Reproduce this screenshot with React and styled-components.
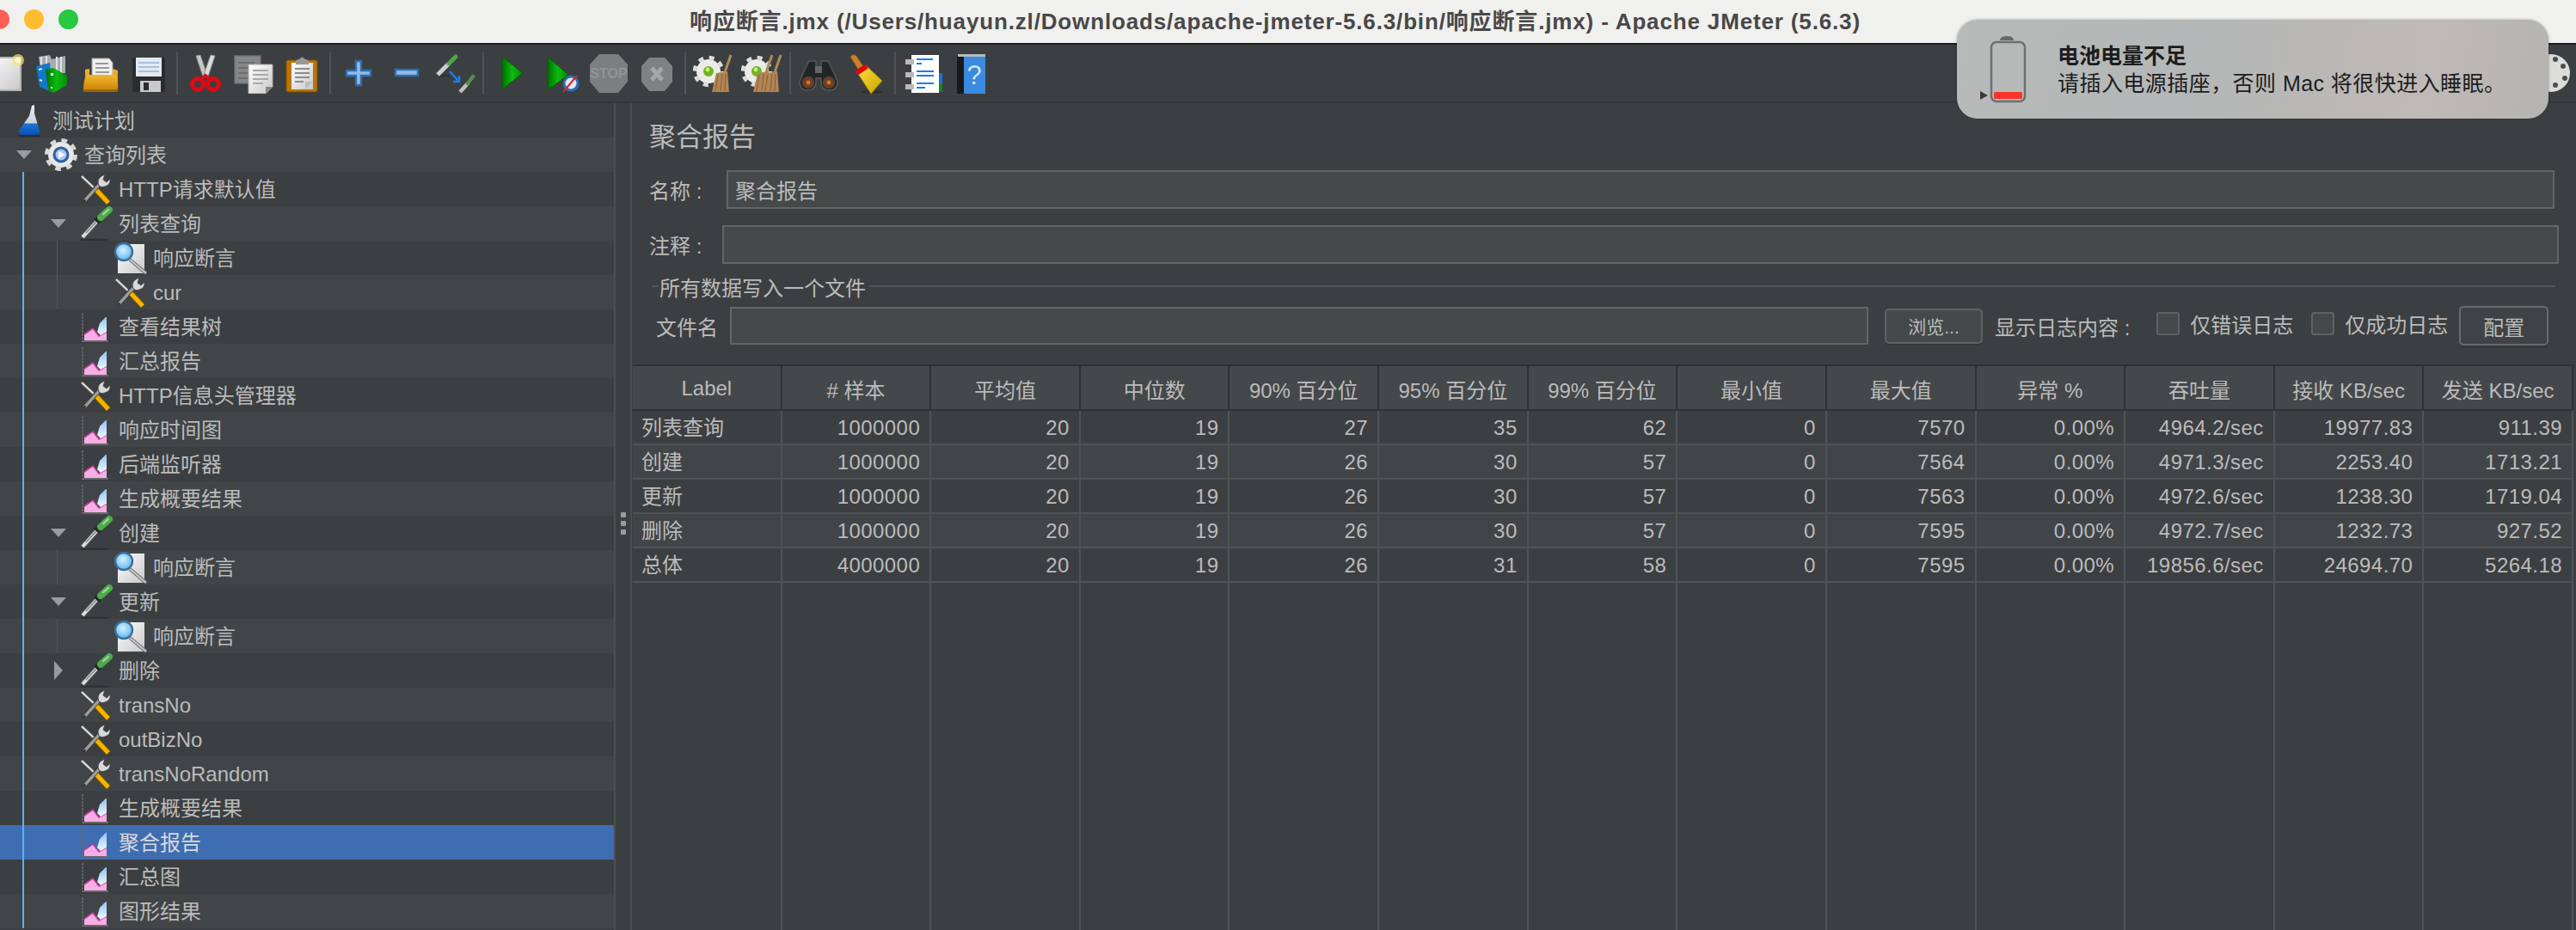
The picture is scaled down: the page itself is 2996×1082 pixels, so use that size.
import React from 'react';
import styled, { createGlobalStyle } from 'styled-components';

const FONT = '"Liberation Sans", "Noto Sans CJK SC", sans-serif';

const GlobalStyle = createGlobalStyle`
  html, body { margin: 0; padding: 0; background: #3c3f41; overflow: hidden; }
  body { font-family: ${FONT}; }
`;

const Page = styled.div`
  position: relative;
  width: 2996px;
  height: 1082px;
  overflow: hidden;
  display: flex;
  flex-direction: column;
  background: #3c3f41;
  color: #bbbbbb;
`;

/* ---------- title bar ---------- */
const TitleBar = styled.div`
  height: 50px;
  flex: none;
  display: flex;
  align-items: center;
  background: #f0f0ee;
  border-bottom: 2px solid #1c1c1c;
  margin-left: -12px;
`;
const Lights = styled.div`
  display: flex;
  gap: 17px;
  width: 0;
  flex: none;
  margin-top: -6px;
`;
const Light = styled.span`
  flex: none;
  width: 23px;
  height: 23px;
  border-radius: 50%;
  background: ${p => p.$color};
`;
const Title = styled.div`
  flex: 1;
  text-align: center;
  font-size: 26px;
  font-weight: 700;
  color: #484848;
  padding-right: 18px;
  margin-top: -6px;
  letter-spacing: 0.85px;
  white-space: nowrap;
`;

/* ---------- toolbar ---------- */
const Toolbar = styled.div`
  height: 66px;
  flex: none;
  display: flex;
  align-items: center;
  margin-left: -24px;
  border-bottom: 2px solid #343638;
`;
const ToolButton = styled.div`
  width: 56.25px;
  height: 48px;
  flex: none;
  display: flex;
  justify-content: center;
`;
const ToolSep = styled.div`
  width: 9.5px;
  flex: none;
  height: 50px;
  display: flex;
  justify-content: center;
  &::before {
    content: '';
    width: 2px;
    background: #505355;
  }
`;
const ToolEnd = styled(ToolButton)`
  margin-left: auto;
  margin-right: 1px;
`;

/* ---------- body ---------- */
const Body = styled.div`
  flex: 1;
  display: flex;
  min-height: 0;
`;
const Tree = styled.div`
  position: relative;
  width: 714px;
  flex: none;
  border-right: 2px solid #4b4e50;
  &::after {
    content: '';
    position: absolute;
    left: 26px;
    top: 80px;
    width: 2px;
    height: 880px;
    background: #5ab1f2;
  }
`;
const Row = styled.div`
  position: relative;
  height: 40px;
  display: flex;
  align-items: center;
  font-size: 24px;
  white-space: nowrap;
  color: ${p => (p.$selected ? '#d6d9dd' : '#bbbbbb')};
  background: ${p => (p.$selected ? '#3f6db1' : p.$alt ? '#414548' : '#3c3f41')};
  &::before {
    content: '';
    display: ${p => (p.$guide ? 'block' : 'none')};
    position: absolute;
    left: 66px;
    top: 0;
    bottom: 0;
    width: 1px;
    background: #54575a;
  }
`;
const RowLabel = styled.span`
  margin-top: ${p => (p.$cjk ? '-3px' : '1px')};
`;
const Indent = styled.div`
  width: ${p => p.$level * 40 + 13}px;
  flex: none;
  display: flex;
  justify-content: flex-end;
  padding-right: 16px;
  box-sizing: border-box;
`;
const NodeIcon = styled.svg`
  width: 41px;
  height: 40px;
  flex: none;
  margin-right: 4px;
  overflow: visible;
`;
const Splitter = styled.div`
  width: 17px;
  flex: none;
  display: flex;
  flex-direction: column;
  align-items: center;
  justify-content: center;
  gap: 4px;
  padding-top: 16px;
`;
const Dot = styled.span`
  width: 6px;
  height: 6px;
  border-radius: 1px;
  background: #9b9b9b;
`;
const Panel = styled.div`
  flex: 1;
  min-width: 0;
  display: flex;
  flex-direction: column;
  border-left: 2px solid #4b4e50;
`;
const PanelHead = styled.div`
  padding-left: 20px;
  flex: none;
`;
const PanelTitle = styled.div`
  font-size: 31px;
  line-height: 40px;
  padding-top: 20px;
  margin-bottom: 18px;
`;
const FieldRow = styled.div`
  display: flex;
  align-items: center;
  height: 45px;
  font-size: 24px;
  margin-right: ${p => p.$right}px;
  margin-bottom: ${p => p.$below || 0}px;
`;
const FieldLabel = styled.div`
  width: ${p => p.$width}px;
  flex: none;
  white-space: nowrap;
`;
const Field = styled.div`
  flex: 1;
  height: 100%;
  box-sizing: border-box;
  display: flex;
  align-items: center;
  padding-left: 8px;
  background: #45494a;
  border: 2px solid #646464;
`;
const Legend = styled.div`
  display: flex;
  align-items: center;
  height: 30px;
  margin: 11px 24px 9px 3px;
  font-size: 24px;
  gap: 1px;
  &::before, &::after {
    content: '';
    height: 2px;
    background: #525558;
  }
  &::before { width: 8px; flex: none; }
  &::after { flex: 1; margin-left: 3px; }
`;
const FileRow = styled.div`
  display: flex;
  align-items: center;
  height: 44px;
  padding-left: 8px;
  font-size: 24px;
  white-space: nowrap;
`;
const FileField = styled(Field)`
  flex: none;
  width: 1324px;
  height: 44px;
  margin-left: 14px;
`;
const Browse = styled.div`
  flex: none;
  width: 114px;
  height: 41px;
  margin: 0 14px 0 19px;
  box-sizing: border-box;
  display: flex;
  align-items: center;
  justify-content: center;
  border: 2px solid #5f6263;
  border-radius: 5px;
  background: #45494a;
  font-size: 21px;
  box-shadow: 0 2px 0 #35373a;
`;
const Check = styled.span`
  flex: none;
  width: 27px;
  height: 27px;
  box-sizing: border-box;
  margin: -6px 12px 0 ${p => p.$left}px;
  border: 2px solid #5f6263;
  border-radius: 3px;
  background: #45494a;
`;
const CheckText = styled.span`
  margin-top: -6px;
`;
const ConfigButton = styled.div`
  flex: none;
  width: 104px;
  height: 46px;
  margin-left: 13px;
  box-sizing: border-box;
  display: flex;
  align-items: center;
  justify-content: center;
  border: 2px solid #686b6c;
  border-radius: 5px;
  background: #3f4345;
  box-shadow: 0 3px 0 #35373a;
`;

/* ---------- table ---------- */
const Table = styled.div`
  flex: 1;
  min-height: 0;
  display: flex;
  flex-direction: column;
  margin: 23px 3px 0 1px;
  border-top: 2px solid #2f3234;
`;
const HeadRow = styled.div`
  display: grid;
  grid-template-columns: repeat(13, 1fr);
  height: 52px;
  flex: none;
  box-sizing: border-box;
  background: #44484a;
  border-bottom: 2px solid #2f3234;
`;
const HeadCell = styled.div`
  display: flex;
  align-items: center;
  justify-content: center;
  padding-top: 2px;
  font-size: 24px;
  white-space: nowrap;
  border-right: 2px solid #2f3234;
`;
const DataRow = styled.div`
  display: grid;
  grid-template-columns: repeat(13, 1fr);
  height: 40px;
  flex: none;
  box-sizing: border-box;
  background: ${p => (p.$alt ? '#414548' : '#3c3f41')};
  border-bottom: 2px solid #505355;
`;
const Cell = styled.div`
  display: flex;
  align-items: center;
  justify-content: ${p => (p.$first ? 'flex-start' : 'flex-end')};
  padding: ${p => (p.$first ? '0 0 5px 10px' : '0 11px 0 0')};
  font-size: 24px;
  letter-spacing: ${p => (p.$first ? '0' : '0.45px')};
  white-space: nowrap;
  min-width: 0;
  border-right: 2px solid #505355;
`;
const FillerRow = styled.div`
  flex: 1;
  display: grid;
  grid-template-columns: repeat(13, 1fr);
  margin-top: 0;
`;
const FillerCell = styled.div`
  border-right: 2px solid #505355;
`;

/* ---------- notification ---------- */
const Notice = styled.div`
  position: absolute;
  left: 2276px;
  top: 23px;
  width: 688px;
  height: 115px;
  box-sizing: border-box;
  display: flex;
  align-items: center;
  padding-left: 25px;
  border-radius: 24px;
  background: linear-gradient(100deg, #b7bab9 0%, #b4b7b7 40%, #bfb9b6 80%, #b4b4b3 100%);
  box-shadow: 0 0 3px rgba(30, 30, 30, 0.4);
  color: #1d1d1d;
`;
const BatterySvg = styled.svg`
  width: 56px;
  height: 80px;
  flex: none;
  margin-right: 36px;
`;
const NoticeText = styled.div`
  display: flex;
  flex-direction: column;
  gap: 2px;
  font-size: 25px;
  line-height: 30px;
  white-space: nowrap;
`;
const NoticeTitle = styled.div`
  font-weight: 700;
`;
const NoticeBody = styled.div`
  letter-spacing: 0.45px;
`;

const HiddenDefs = styled.svg`
  position: absolute;
  width: 0;
  height: 0;
`;

/* ---------- icon drawings ---------- */
const Defs = () => (
  <HiddenDefs>
    <defs>
      <linearGradient id="paper" x1="0" y1="0" x2="1" y2="1">
        <stop offset="0" stopColor="#ffffff" />
        <stop offset="1" stopColor="#c8c8c8" />
      </linearGradient>
      <linearGradient id="green" x1="0" y1="0" x2="1" y2="0">
        <stop offset="0" stopColor="#006f00" />
        <stop offset="0.5" stopColor="#0bbb10" />
        <stop offset="1" stopColor="#038a08" />
      </linearGradient>
      <linearGradient id="folder" x1="0" y1="0" x2="0" y2="1">
        <stop offset="0" stopColor="#f3b72c" />
        <stop offset="1" stopColor="#c77f06" />
      </linearGradient>
      <radialGradient id="lens" cx="0.45" cy="0.4" r="0.6">
        <stop offset="0" stopColor="#d4f3ff" />
        <stop offset="1" stopColor="#5eb6f0" />
      </radialGradient>
      <linearGradient id="flask" x1="0" y1="0" x2="0" y2="1">
        <stop offset="0" stopColor="#eceeef" />
        <stop offset="0.6" stopColor="#c8d2de" />
        <stop offset="0.63" stopColor="#1d74d8" />
        <stop offset="1" stopColor="#0a4fb0" />
      </linearGradient>
      <linearGradient id="broom" x1="0" y1="0" x2="1" y2="1">
        <stop offset="0" stopColor="#ffe23c" />
        <stop offset="1" stopColor="#c9a400" />
      </linearGradient>
      <linearGradient id="crystal" x1="0" y1="0" x2="0" y2="1">
        <stop offset="0" stopColor="#8fc4f2" />
        <stop offset="1" stopColor="#f2f8ff" />
      </linearGradient>
    </defs>
  </HiddenDefs>
);

const FlaskNode = () => (
  <g>
    <ellipse cx="13" cy="37" rx="14" ry="1.6" fill="#2c2e30" />
    <path d="M16 2 L19 1 L19 11 L25 31 Q26 36 21 36 H5 Q0 36 1 31 L13 14Z" fill="url(#flask)" />
  </g>
);

const GearNode = ({ cx = 18, cy = 20 }) => (
  <g>
    <circle cx={cx} cy={cy} r="15" fill="#e8e8e6" />
    <circle cx={cx} cy={cy} r="16.5" fill="none" stroke="#d8d8d6" strokeWidth="5" strokeDasharray="6.5 6.45" />
    <circle cx={cx} cy={cy} r="9.5" fill="#2d5da6" />
    <circle cx={cx} cy={cy} r="6.5" fill="#a8c8ea" />
    <path d={`M${cx - 3} ${cy - 4.5} L${cx + 5} ${cy} L${cx - 3} ${cy + 4.5}Z`} fill="#f4f8fc" />
  </g>
);

const ToolsNode = () => (
  <g>
    <line x1="2" y1="5" x2="20" y2="22" stroke="#555" strokeWidth="4" />
    <line x1="2" y1="5" x2="20" y2="22" stroke="#e4e4e4" strokeWidth="2" />
    <line x1="4" y1="35" x2="24" y2="13" stroke="#3b3b3b" strokeWidth="6" />
    <line x1="5" y1="34" x2="24" y2="13" stroke="#9a9c9e" strokeWidth="3.4" />
    <circle cx="5.5" cy="33.5" r="1.4" fill="#333" />
    <path d="M22 16 Q19 9 25 5 L29 3 L27 9 L31 12 L35 8 Q36 15 29 17 Q25 19 22 16Z" fill="#d9d9d9" stroke="#4a4a4a" strokeWidth="1" />
    <line x1="19" y1="21" x2="33" y2="36" stroke="#6b5000" strokeWidth="7.5" />
    <line x1="19.5" y1="21.5" x2="33" y2="36" stroke="#f4b400" strokeWidth="5" />
  </g>
);

const DropperShape = () => (
  <g>
    <line x1="3" y1="36" x2="22" y2="15" stroke="#55585a" strokeWidth="6" />
    <line x1="3" y1="36" x2="21" y2="16" stroke="#dcdcdc" strokeWidth="4" />
    <line x1="7" y1="31" x2="19" y2="18" stroke="#808080" strokeWidth="1.3" />
    <line x1="19" y1="18" x2="25" y2="12" stroke="#1f2a20" strokeWidth="8" />
    <line x1="24" y1="13" x2="34" y2="4" stroke="#4faa4d" strokeWidth="8" strokeLinecap="round" />
    <line x1="27" y1="9" x2="33" y2="4" stroke="#93d68f" strokeWidth="2.4" strokeLinecap="round" />
  </g>
);

const DropperNode = () => (
  <g>
    <ellipse cx="17" cy="39" rx="17" ry="1.6" fill="#2f3133" />
    <DropperShape />
  </g>
);

const AssertNode = () => (
  <g>
    <rect x="4" y="4" width="31" height="34" fill="url(#paper)" />
    <line x1="18" y1="22" x2="37" y2="38" stroke="#6c6e70" strokeWidth="4" />
    <line x1="18" y1="22" x2="37" y2="38" stroke="#c8c8c8" strokeWidth="2" />
    <circle cx="11" cy="13" r="10" fill="url(#lens)" stroke="#3e6c9c" strokeWidth="2.4" />
  </g>
);

const GraphNode = () => (
  <g>
    <line x1="3" y1="4" x2="3" y2="38" stroke="#66696c" strokeWidth="1.6" strokeDasharray="3 1" />
    <line x1="2" y1="37" x2="33" y2="37" stroke="#66696c" strokeWidth="2" />
    <path d="M5 36 L5 29 L15 22 L22 31 L31 26 L31 36Z" fill="#f8aee4" />
    <path d="M5 29 L15 22 L22 31 L31 26" fill="none" stroke="#bf3f9c" strokeWidth="1.6" />
    <path d="M20 26 L23 16 L30 9 L31 9 L31 26 L24 30Z" fill="url(#crystal)" />
  </g>
);

const nodeIcons = {
  flask: <g transform="translate(5 1)"><FlaskNode /></g>,
  gear: <GearNode />,
  tools: <ToolsNode />,
  dropper: <DropperNode />,
  assert: <AssertNode />,
  graph: <GraphNode />,
};

const ArrowDown = () => (
  <svg width="18" height="12" viewBox="0 0 18 12">
    <path d="M0 1 H18 L9 11Z" fill="#999c9e" />
  </svg>
);

const ArrowRight = () => (
  <svg width="18" height="24" viewBox="0 0 18 24">
    <path d="M4 1 L14 12 L4 23Z" fill="#999c9e" />
  </svg>
);

const Clock = () => (
  <g>
    <circle cx="37" cy="36" r="8" fill="#dfe9f2" stroke="#2e6db0" strokeWidth="3" />
    <line x1="28" y1="46" x2="44" y2="27" stroke="#e02030" strokeWidth="2" />
  </g>
);

const Broomstick = ({ x = 0 }) => (
  <g transform={`translate(${x} 0)`}>
    <line x1="40" y1="3" x2="32" y2="26" stroke="#b08a5c" strokeWidth="3" />
    <path d="M23 24 L36 22 L38 46 L18 46Z" fill="#b28554" />
    <path d="M25 26 L22 45 M30 25 L28 45 M34 25 L33 45" stroke="#8c6338" strokeWidth="1.2" />
  </g>
);

const ClearGear = () => (
  <g>
    <circle cx="18" cy="22" r="14" fill="#ebebe9" />
    <circle cx="18" cy="22" r="16" fill="none" stroke="#dcdcda" strokeWidth="4.5" strokeDasharray="6 6.6" />
    <circle cx="18" cy="22" r="6" fill="#6fb61f" />
    <circle cx="17" cy="20" r="2.4" fill="#c5ef7c" />
  </g>
);

const toolIcons = {
  newDoc: (
    <g>
      <rect x="4" y="6" width="40" height="38" fill="url(#paper)" stroke="#b4b4b4" strokeWidth="2" />
      <circle cx="41" cy="9" r="7" fill="#f3e27a" opacity="0.7" />
      <circle cx="41" cy="9" r="3.5" fill="#fff6c4" />
    </g>
  ),
  templates: (
    <g>
      <path d="M9 5 L22 3 L24 8 L40 4 L40 24 L12 26Z" fill="#a8adb0" />
      <path d="M12 5 L12 24 M18 4 L18 24 M30 5 L30 24 M35 5 L35 24" stroke="#dfe3e5" strokeWidth="2" />
      <path d="M6 16 L22 12 L24 46 L10 40Z" fill="#1577c8" />
      <path d="M9 20 L13 19 M10 32 L13 33" stroke="#cfe8ff" strokeWidth="2" />
      <path d="M17 20 L26 18 L42 27 L42 38 L26 47 L20 44Z" fill="url(#green)" />
      <rect x="23" y="24" width="3" height="3" fill="#e8ffe8" />
      <rect x="23" y="40" width="2" height="2" fill="#e8ffe8" />
    </g>
  ),
  open: (
    <g>
      <path d="M14 7 L34 7 L38 12 L38 28 L14 28Z" fill="#efefef" stroke="#a4a4a4" strokeWidth="1" />
      <path d="M18 13 H33 M18 18 H34 M18 23 H34" stroke="#9a9a9a" strokeWidth="2" />
      <path d="M6 20 L11 19 L11 27 L38 27 L38 19 L44 21 L44 46 L6 46Z" fill="url(#folder)" />
      <path d="M4 46 Q4 30 8 26 L42 26 Q45 34 44 46Z" fill="url(#folder)" />
      <rect x="4" y="43" width="40" height="3" fill="#9c6404" />
    </g>
  ),
  save: (
    <g>
      <path d="M5 6 H43 V44 Q43 46 41 46 H8 Q5 46 5 43Z" fill="#2b2c2e" />
      <rect x="9" y="6" width="30" height="22" fill="#e3eaf2" />
      <path d="M12 12 H36 M12 17 H36 M12 22 H36" stroke="#a7c2dc" strokeWidth="2" />
      <rect x="14" y="33" width="24" height="13" fill="#c9c9c9" />
      <rect x="18" y="35" width="6" height="9" fill="#2b2c2e" />
    </g>
  ),
  cut: (
    <g>
      <path d="M13 4 L18 3 L26 26 L21 28Z" fill="#c8c8c8" stroke="#8d8d8d" strokeWidth="1" />
      <path d="M35 4 L30 3 L22 26 L27 28Z" fill="#dcdcdc" stroke="#8d8d8d" strokeWidth="1" />
      <circle cx="15" cy="37" r="6.5" fill="none" stroke="#e00a14" strokeWidth="5" />
      <circle cx="33" cy="37" r="6.5" fill="none" stroke="#e00a14" strokeWidth="5" />
      <path d="M19 31 L24 27 L29 31" fill="none" stroke="#e00a14" strokeWidth="4" />
    </g>
  ),
  copy: (
    <g>
      <rect x="2" y="4" width="30" height="32" fill="#858789" stroke="#6d6f71" strokeWidth="1.4" />
      <path d="M6 12 H26 M6 18 H26 M6 24 H26 M6 30 H26" stroke="#6c6e70" strokeWidth="2" />
      <path d="M18 14 H46 V40 L38 48 H18Z" fill="url(#paper)" stroke="#a9a9a9" strokeWidth="1" />
      <path d="M23 21 H41 M23 26 H41 M23 31 H41 M23 36 H35" stroke="#a9a9a9" strokeWidth="2" />
      <path d="M46 40 L38 40 L38 48Z" fill="#888" />
    </g>
  ),
  paste: (
    <g>
      <rect x="6" y="9" width="36" height="37" rx="2" fill="#bc7504" stroke="#7d4d00" strokeWidth="1" />
      <rect x="12" y="12" width="25" height="31" fill="url(#paper)" />
      <path d="M16 19 H33 M16 24 H33 M16 29 H33 M16 34 H26" stroke="#8c8c8c" strokeWidth="2" />
      <path d="M17 11 Q17 8 21 8 Q24 3 28 8 Q32 8 32 12 L32 14 H17Z" fill="#9a9a9a" />
      <path d="M37 34 L28 43 L28 34Z" fill="#bdbdbd" />
    </g>
  ),
  plus: (
    <g>
      <path d="M21 10 H27 V21 H38 V27 H27 V38 H21 V27 H10 V21 H21Z" fill="#8fbbe6" stroke="#2f6eb5" strokeWidth="2.4" />
    </g>
  ),
  minus: <rect x="11" y="20" width="26" height="7" fill="#8fbbe6" stroke="#2f6eb5" strokeWidth="2.4" />,
  toggle: (
    <g>
      <ellipse cx="10" cy="27" rx="8" ry="1.6" fill="#303234" />
      <line x1="4" y1="26" x2="17" y2="13" stroke="#cdcdcd" strokeWidth="5" />
      <line x1="17" y1="13" x2="25" y2="5" stroke="#4ea64a" strokeWidth="5" strokeLinecap="round" />
      <path d="M18 22 L28 33 M29 27 L29 34 L22 34" fill="none" stroke="#1a7bf0" strokeWidth="2.6" />
      <line x1="30" y1="46" x2="40" y2="35" stroke="#c0c0c0" strokeWidth="4.5" />
      <line x1="39" y1="36" x2="45" y2="28" stroke="#4e8f4c" strokeWidth="4.5" strokeLinecap="round" />
    </g>
  ),
  start: <path d="M13 5 L37 24 L13 43Z" fill="url(#green)" stroke="#046004" strokeWidth="1" />,
  startNoPause: (
    <g>
      <path d="M10 5 L34 26 L10 44Z" fill="url(#green)" stroke="#046004" strokeWidth="1" />
      <Clock />
    </g>
  ),
  stop: (
    <g>
      <path d="M13 2 H35 L46 14 V34 L35 47 H13 L2 34 V14Z" fill="#7d7e7f" />
      <text x="24" y="30" textAnchor="middle" fontSize="16" fontWeight="700" fontFamily="Liberation Sans" fill="#939495">STOP</text>
    </g>
  ),
  shutdown: (
    <g>
      <path d="M15 6 H33 L42 16 V34 L33 45 H15 L6 34 V16Z" fill="#808182" />
      <path d="M18 18 L30 32 M30 18 L18 32" stroke="#a5a6a7" strokeWidth="5" />
    </g>
  ),
  clear: (
    <g>
      <ClearGear />
      <Broomstick x={4} />
    </g>
  ),
  clearAll: (
    <g>
      <ClearGear />
      <Broomstick x={-4} />
      <Broomstick x={6} />
    </g>
  ),
  binoculars: (
    <g>
      <path d="M7 22 L13 10 H21 V22 H27 V10 H35 L41 22 L46 34 Q46 44 36 44 Q27 44 27 34 V30 H21 V34 Q21 44 11 44 Q2 44 2 34Z" fill="#232425" stroke="#59595a" strokeWidth="1.4" />
      <circle cx="12" cy="35" r="6.5" fill="#7a3d16" stroke="#444" strokeWidth="1.5" />
      <circle cx="36" cy="35" r="6.5" fill="#7a3d16" stroke="#444" strokeWidth="1.5" />
      <circle cx="12" cy="35" r="2.4" fill="#c37a3a" />
      <circle cx="36" cy="35" r="2.4" fill="#c37a3a" />
      <rect x="20" y="16" width="8" height="8" fill="#666" />
    </g>
  ),
  broom: (
    <g>
      <ellipse cx="30" cy="46" rx="13" ry="2" fill="#2f3133" />
      <path d="M5 5 Q8 1 12 4 L22 19 L16 23 Z" fill="#c9812b" stroke="#8a5714" strokeWidth="1" />
      <path d="M12 22 L23 15 L42 33 L29 48 Z" fill="url(#broom)" stroke="#a68600" strokeWidth="1" />
      <path d="M12 24 L24 16" stroke="#e0060e" strokeWidth="6" />
    </g>
  ),
  log: (
    <g>
      <rect x="38" y="24" width="8" height="12" fill="#1a70d8" />
      <rect x="38" y="36" width="8" height="10" fill="#108a10" />
      <rect x="10" y="3" width="32" height="44" fill="#ffffff" />
      <rect x="3" y="8" width="10" height="6" fill="#b8b8b8" />
      <rect x="3" y="23" width="10" height="6" fill="#b8b8b8" />
      <rect x="3" y="37" width="10" height="6" fill="#b8b8b8" />
      <path d="M16 8 H35 M16 13 H22 M16 22 H36 M16 27 H36 M16 36 H36 M16 41 H26" stroke="#1a7bea" strokeWidth="2" />
    </g>
  ),
  help: (
    <g>
      <rect x="7" y="3" width="33" height="45" fill="#3a8ae0" />
      <rect x="7" y="3" width="8" height="45" fill="#17191b" />
      <rect x="8" y="2" width="32" height="3" fill="#b9bbbd" />
      <text x="27" y="37" textAnchor="middle" fontSize="31" fontFamily="Liberation Sans" fill="#cfe4fa">?</text>
    </g>
  ),
  settings: (
    <g>
      <circle cx="24" cy="24" r="22" fill="#dcdcdb" />
      <circle cx="38" cy="16" r="3" fill="#4d4d4d" />
      <circle cx="40" cy="30" r="3" fill="#4d4d4d" />
      <circle cx="29" cy="38" r="3" fill="#4d4d4d" />
      <circle cx="29" cy="8" r="3" fill="#4d4d4d" />
    </g>
  ),
};

const Tool = ({ name }) => (
  <ToolButton>
    <svg width="48" height="48" viewBox="0 0 48 48">{toolIcons[name]}</svg>
  </ToolButton>
);

const toolbar = [
  'newDoc', 'templates', 'open', 'save', '|',
  'cut', 'copy', 'paste', '|',
  'plus', 'minus', 'toggle', '|',
  'start', 'startNoPause', 'stop', 'shutdown', '|',
  'clear', 'clearAll', '|',
  'binoculars', 'broom', '|',
  'log', 'help',
];

const nodes = [
  { label: '测试计划', level: 0, icon: 'flask' },
  { label: '查询列表', level: 1, icon: 'gear', arrow: 'down' },
  { label: 'HTTP请求默认值', level: 2, icon: 'tools' },
  { label: '列表查询', level: 2, icon: 'dropper', arrow: 'down' },
  { label: '响应断言', level: 3, icon: 'assert', guide: true },
  { label: 'cur', level: 3, icon: 'tools', guide: true },
  { label: '查看结果树', level: 2, icon: 'graph' },
  { label: '汇总报告', level: 2, icon: 'graph' },
  { label: 'HTTP信息头管理器', level: 2, icon: 'tools' },
  { label: '响应时间图', level: 2, icon: 'graph' },
  { label: '后端监听器', level: 2, icon: 'graph' },
  { label: '生成概要结果', level: 2, icon: 'graph' },
  { label: '创建', level: 2, icon: 'dropper', arrow: 'down' },
  { label: '响应断言', level: 3, icon: 'assert', guide: true },
  { label: '更新', level: 2, icon: 'dropper', arrow: 'down' },
  { label: '响应断言', level: 3, icon: 'assert', guide: true },
  { label: '删除', level: 2, icon: 'dropper', arrow: 'right' },
  { label: 'transNo', level: 2, icon: 'tools' },
  { label: 'outBizNo', level: 2, icon: 'tools' },
  { label: 'transNoRandom', level: 2, icon: 'tools' },
  { label: '生成概要结果', level: 2, icon: 'graph' },
  { label: '聚合报告', level: 2, icon: 'graph', selected: true },
  { label: '汇总图', level: 2, icon: 'graph' },
  { label: '图形结果', level: 2, icon: 'graph' },
];

const columns = ['Label', '# 样本', '平均值', '中位数', '90% 百分位', '95% 百分位', '99% 百分位', '最小值', '最大值', '异常 %', '吞吐量', '接收 KB/sec', '发送 KB/sec'];

const results = [
  ['列表查询', '1000000', '20', '19', '27', '35', '62', '0', '7570', '0.00%', '4964.2/sec', '19977.83', '911.39'],
  ['创建', '1000000', '20', '19', '26', '30', '57', '0', '7564', '0.00%', '4971.3/sec', '2253.40', '1713.21'],
  ['更新', '1000000', '20', '19', '26', '30', '57', '0', '7563', '0.00%', '4972.6/sec', '1238.30', '1719.04'],
  ['删除', '1000000', '20', '19', '26', '30', '57', '0', '7595', '0.00%', '4972.7/sec', '1232.73', '927.52'],
  ['总体', '4000000', '20', '19', '26', '31', '58', '0', '7595', '0.00%', '19856.6/sec', '24694.70', '5264.18'],
];

const hasCjk = text => /[^\x00-\x7f]/.test(text);

export default function App() {
  return (
    <Page>
      <GlobalStyle />
      <Defs />
      <TitleBar>
        <Lights>
          <Light $color="#ff5f57" />
          <Light $color="#febc2e" />
          <Light $color="#28c840" />
        </Lights>
        <Title>响应断言.jmx (/Users/huayun.zl/Downloads/apache-jmeter-5.6.3/bin/响应断言.jmx) - Apache JMeter (5.6.3)</Title>
      </TitleBar>
      <Toolbar>
        {toolbar.map((name, i) => (name === '|' ? <ToolSep key={i} /> : <Tool key={i} name={name} />))}
        <ToolEnd>
          <svg width="48" height="48" viewBox="0 0 48 48">{toolIcons.settings}</svg>
        </ToolEnd>
      </Toolbar>
      <Body>
        <Tree>
          {nodes.map((n, i) => (
            <Row key={i} $alt={i % 2 === 1} $selected={n.selected} $guide={n.guide}>
              <Indent $level={n.level}>
                {n.arrow === 'down' && <ArrowDown />}
                {n.arrow === 'right' && <ArrowRight />}
              </Indent>
              <NodeIcon viewBox="0 0 41 40">{nodeIcons[n.icon]}</NodeIcon>
              <RowLabel $cjk={hasCjk(n.label)}>{n.label}</RowLabel>
            </Row>
          ))}
        </Tree>
        <Splitter>
          <Dot />
          <Dot />
          <Dot />
        </Splitter>
        <Panel>
          <PanelHead>
            <PanelTitle>聚合报告</PanelTitle>
            <FieldRow $right={25} $below={19}>
              <FieldLabel $width={90}>名称 :</FieldLabel>
              <Field>聚合报告</Field>
            </FieldRow>
            <FieldRow $right={20}>
              <FieldLabel $width={85}>注释 :</FieldLabel>
              <Field />
            </FieldRow>
            <Legend>所有数据写入一个文件</Legend>
            <FileRow>
              文件名
              <FileField />
              <Browse>浏览...</Browse>
              显示日志内容 :
              <Check $left={31} />
              <CheckText>仅错误日志</CheckText>
              <Check $left={21} />
              <CheckText>仅成功日志</CheckText>
              <ConfigButton>配置</ConfigButton>
            </FileRow>
          </PanelHead>
          <Table>
            <HeadRow>
              {columns.map(c => <HeadCell key={c}>{c}</HeadCell>)}
            </HeadRow>
            {results.map((row, i) => (
              <DataRow key={i} $alt={i % 2 === 1}>
                {row.map((v, j) => <Cell key={j} $first={j === 0}>{v}</Cell>)}
              </DataRow>
            ))}
            <FillerRow>
              {columns.map(c => <FillerCell key={c} />)}
            </FillerRow>
          </Table>
        </Panel>
      </Body>
      <Notice>
        <BatterySvg viewBox="0 0 56 80">
          <path d="M25 6 Q25 1 33 1 Q41 1 41 6Z" fill="#66686a" />
          <rect x="15" y="8" width="39" height="69" rx="6" fill="none" stroke="#6e7072" strokeWidth="2.5" />
          <rect x="18" y="66" width="33" height="8" rx="1.5" fill="#f9352a" />
          <path d="M2 65 L11 70 L2 75Z" fill="#3a3a3a" />
        </BatterySvg>
        <NoticeText>
          <NoticeTitle>电池电量不足</NoticeTitle>
          <NoticeBody>请插入电源插座，否则 Mac 将很快进入睡眠。</NoticeBody>
        </NoticeText>
      </Notice>
    </Page>
  );
}
